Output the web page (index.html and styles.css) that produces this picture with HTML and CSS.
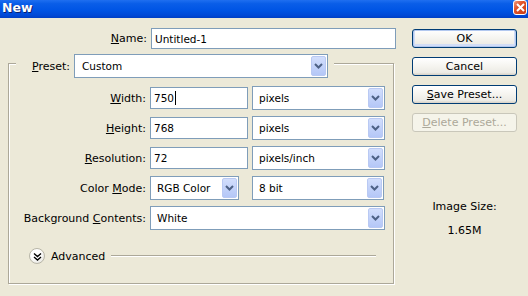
FILE: index.html
```html
<!DOCTYPE html>
<html>
<head>
<meta charset="utf-8">
<link rel="stylesheet" href="styles.css">
</head>
<body>
<div class="window">
  <div class="titlebar">
    <span class="title">New</span>
    <span class="close"><svg width="9" height="9" viewBox="0 0 9 9"><path d="M1 1L8 8M8 1L1 8" stroke="#fff" stroke-width="2"/></svg></span>
  </div>
  <div class="content">
    <div class="main">
      <div class="name-row">
        <span class="lbl"><u>N</u>ame:</span>
        <div class="field name">Untitled-1</div>
      </div>
      <div class="group">
        <div class="preset-row">
          <span class="plbl"><u>P</u>reset:</span>
          <div class="select preset"><span class="val">Custom</span><span class="arrow"><svg width="9" height="6" viewBox="0 0 9 6"><path d="M1 1L4.5 4.5L8 1" fill="none" stroke="#4d6185" stroke-width="2"/></svg></span></div>
        </div>
        <div class="rows">
          <div class="row">
            <span class="lbl"><u>W</u>idth:</span>
            <div class="field num">750<span class="caret"></span></div>
            <div class="select unit"><span class="val">pixels</span><span class="arrow"><svg width="9" height="6" viewBox="0 0 9 6"><path d="M1 1L4.5 4.5L8 1" fill="none" stroke="#4d6185" stroke-width="2"/></svg></span></div>
          </div>
          <div class="row">
            <span class="lbl"><u>H</u>eight:</span>
            <div class="field num">768</div>
            <div class="select unit"><span class="val">pixels</span><span class="arrow"><svg width="9" height="6" viewBox="0 0 9 6"><path d="M1 1L4.5 4.5L8 1" fill="none" stroke="#4d6185" stroke-width="2"/></svg></span></div>
          </div>
          <div class="row">
            <span class="lbl"><u>R</u>esolution:</span>
            <div class="field num">72</div>
            <div class="select unit"><span class="val">pixels/inch</span><span class="arrow"><svg width="9" height="6" viewBox="0 0 9 6"><path d="M1 1L4.5 4.5L8 1" fill="none" stroke="#4d6185" stroke-width="2"/></svg></span></div>
          </div>
          <div class="row">
            <span class="lbl">Color <u>M</u>ode:</span>
            <div class="select mode"><span class="val">RGB Color</span><span class="arrow"><svg width="9" height="6" viewBox="0 0 9 6"><path d="M1 1L4.5 4.5L8 1" fill="none" stroke="#4d6185" stroke-width="2"/></svg></span></div>
            <div class="select unit bits"><span class="val">8 bit</span><span class="arrow"><svg width="9" height="6" viewBox="0 0 9 6"><path d="M1 1L4.5 4.5L8 1" fill="none" stroke="#4d6185" stroke-width="2"/></svg></span></div>
          </div>
          <div class="row">
            <span class="lbl">Background <u>C</u>ontents:</span>
            <div class="select wide"><span class="val">White</span><span class="arrow"><svg width="9" height="6" viewBox="0 0 9 6"><path d="M1 1L4.5 4.5L8 1" fill="none" stroke="#4d6185" stroke-width="2"/></svg></span></div>
          </div>
        </div>
        <div class="advanced">
          <span class="adv-icon"><svg width="9" height="9" viewBox="0 0 9 9"><path d="M1 1.5L4.5 4.5L8 1.5M1 5L4.5 8L8 5" fill="none" stroke="#000" stroke-width="1.4"/></svg></span>
          <span class="adv-text">Advanced</span>
          <span class="adv-line"></span>
        </div>
      </div>
    </div>
    <div class="side">
      <div class="btn default">OK</div>
      <div class="btn">Cancel</div>
      <div class="btn"><u>S</u>ave Preset...</div>
      <div class="btn disabled"><u>D</u>elete Preset...</div>
      <div class="size">
        <div class="size-lbl">Image Size:</div>
        <div class="size-val">1.65M</div>
      </div>
    </div>
  </div>
</div>
</body>
</html>
```

FILE: styles.css
```css
* { box-sizing: border-box; }
html, body { margin: 0; padding: 0; }
body {
  width: 528px;
  height: 296px;
  overflow: hidden;
  background: #ece9d8;
  font-family: "DejaVu Sans", Verdana, sans-serif;
  font-size: 11px;
  color: #000;
}
.window { width: 528px; height: 296px; }
.titlebar {
  height: 18px;
  background: linear-gradient(#1f6ff0 0%, #0a5ee8 20%, #0055e5 55%, #0049d6 85%, #003fc4 100%);
  display: flex;
  align-items: center;
  justify-content: space-between;
  padding: 0 1px 0 2px;
}
.title {
  color: #fff;
  font-family: "DejaVu Sans", sans-serif;
  font-weight: bold;
  font-size: 12.5px;
  text-shadow: 1px 1px 0 #0a1f6e;
  margin-top: -3px;
}
.close {
  width: 14px;
  height: 15px;
  margin-top: -3px;
  border: 1px solid #fff;
  border-radius: 3px;
  background: linear-gradient(135deg, #f09a7e 0%, #e0522a 40%, #c73c14 100%);
  display: flex;
  align-items: center;
  justify-content: center;
}
.content { display: flex; }
.main { width: 394px; padding: 10px 0 0 8px; }
.name-row { display: flex; align-items: center; gap: 4px; }
.lbl { width: 139px; text-align: right; flex: none; }
.field {
  height: 22px;
  border: 1px solid #7f9db9;
  background: #fff;
  font-size: 10.5px;
  padding: 0 0 0 3px;
  display: flex;
  align-items: center;
  flex: none;
}
.field.name { width: 245px; height: 21px; }
.field.num { width: 98px; }
.caret { display: inline-block; width: 1px; height: 14px; background: #000; margin-left: 1px; }
.group {
  margin-top: 14px;
  width: 386px;
  height: 221px;
  border: 1px solid #aca899;
  box-shadow: inset 1px 1px 0 #fff, 1px 1px 0 #fff;
}
.preset-row {
  margin: -10px 0 0 7px;
  width: 318px;
  height: 24px;
  background: #ece9d8;
  display: flex;
  align-items: center;
}
.plbl { width: 54px; text-align: right; flex: none; }
.select {
  height: 24px;
  border: 1px solid #7f9db9;
  background: #fff;
  display: flex;
  align-items: center;
  justify-content: space-between;
  padding: 0 1px 0 6px;
  font-size: 10.5px;
  flex: none;
}
.preset { width: 254px; margin-left: 4px; padding-left: 7px; }
.unit { width: 133px; }
.bits { width: 132px; margin-left: 9px; }
.mode { width: 89px; }
.wide { width: 235px; }
.arrow {
  width: 15px;
  height: 20px;
  border-radius: 2px;
  border: 1px solid #b9c9f3;
  background: linear-gradient(#d2defc, #b4c7f7);
  display: flex;
  align-items: center;
  justify-content: center;
}
.rows { margin-top: 8px; display: flex; flex-direction: column; gap: 6px; }
.row { display: flex; align-items: center; gap: 4px; height: 24px; }
.row .lbl { width: 137px; }
.advanced {
  margin-top: 18px;
  display: flex;
  align-items: center;
  height: 16px;
  padding-left: 20px;
  padding-right: 17px;
}
.adv-icon {
  width: 16px;
  height: 16px;
  flex: none;
  border-radius: 50%;
  border: 1px solid #b8b6a8;
  background: radial-gradient(circle at 40% 35%, #fff 40%, #dcdad0 100%);
  display: flex;
  align-items: center;
  justify-content: center;
}
.adv-text { margin-left: 6px; }
.adv-line {
  margin-left: 6px;
  flex: 1;
  height: 2px;
  border-top: 1px solid #aca899;
  border-bottom: 1px solid #fff;
}
.side {
  margin-left: 18px;
  padding-top: 11px;
  display: flex;
  flex-direction: column;
  gap: 9px;
  width: 105px;
}
.btn {
  width: 105px;
  height: 19px;
  border: 1px solid #003c74;
  border-radius: 3px;
  background: linear-gradient(#ffffff 0%, #f5f4ef 50%, #ecebe5 85%, #d6d0c5 100%);
  display: flex;
  align-items: center;
  justify-content: center;
}
.btn.default { box-shadow: inset 0 0 0 1px #b2c8ef, inset 0 -1px 0 2px #d2ddf6; }
.btn.disabled {
  border-color: #c9c7ba;
  background: #f5f4ea;
  color: #aca899;
}
.size { margin-top: 59px; text-align: center; line-height: 13px; }
.size-val { margin-top: 11px; }
```
